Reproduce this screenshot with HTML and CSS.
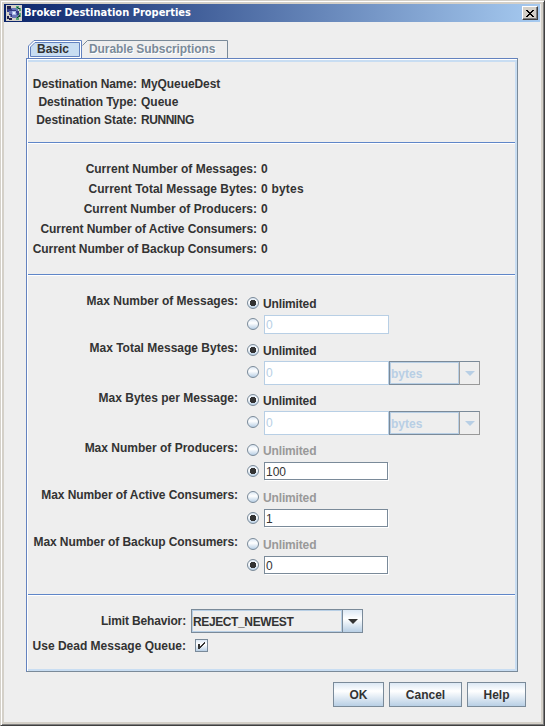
FILE: index.html
```html
<!DOCTYPE html>
<html lang="en">
<head>
<meta charset="utf-8">
<title>Broker Destination Properties</title>
<link rel="stylesheet" href="styles.css">
</head>
<body>
<div class="window">
  <header class="titlebar">
    <svg class="app-icon" viewBox="0 0 16 16" width="16" height="16" shape-rendering="crispEdges">
      <rect width="16" height="16" fill="#d4d0c8"/>
      <path d="M1 1h4v2h4v1H4v3H2V4H1zM1 11h2v2h3v2H3v-1H1z" fill="#20204c"/>
      <path d="M10 1h3v2h2v3h-2V4h-3zM12 8h3v4h-2v3h-3v-3h2z" fill="#58a878"/>
      <path d="M11 2h1v1h2v1h-2zM13 10h1v2h-2v1h-1v-2h2z" fill="#173f38"/>
      <path d="M5 3h5v1h2v2h1v4h-1v2h-2v1H6v-1H4v-2H3V5h2z" fill="#6874b8"/>
      <path d="M1 4h5v1h4v1H3v1H1zM3 9h3v3H5v-2H3zM10 6h3v4h-2V8h-1z" fill="#343c84"/>
      <path d="M6 6h4v4H6z" fill="#a8b8e8"/><path d="M7 7h2v2H7z" fill="#e8f0ff"/>
    </svg>
    <h1 class="title">Broker Destination Properties</h1>
    <button class="close" aria-label="Close">
      <svg viewBox="0 0 8 7" width="8" height="7" shape-rendering="crispEdges"><path d="M0 0h2v1h1v1h2V1h1V0h2v1H7v1H6v1H5v1h1v1h1v1h1v1H6V6H5V5H3v1H2v1H0V6h1V5h1V4h1V3H2V2H1V1H0z" fill="#000"/></svg>
    </button>
  </header>
  <nav class="tabs">
    <div class="tab active"><svg class="tab-shape" width="54" height="18" viewBox="0 0 54 18"><path d="M.5 18V6L6 .5h47.500V18" fill="#fff" stroke="#6382bf"/><path d="M2.500 16.500V7L7 2.500h44.500V16.500z" fill="#c8ddf2" stroke="#6382bf"/></svg><span>Basic</span></div>
    <div class="tab disabled"><svg class="tab-shape" width="146" height="18" viewBox="0 0 146 18"><path d="M.5 5.500L5.500.5H145.500V18" fill="none" stroke="#7a8a99"/></svg><span>Durable Subscriptions</span></div>
  </nav>
  <main class="panel">
    <section class="info dest">
      <label>Destination Name:</label><span class="snug">MyQueueDest</span>
      <label>Destination Type:</label><span>Queue</span>
      <label>Destination State:</label><span class="caps">RUNNING</span>
    </section>
    <section class="info current">
      <label>Current Number of Messages:</label><span>0</span>
      <label>Current Total Message Bytes:</label><span class="bytes">0 bytes</span>
      <label>Current Number of Producers:</label><span>0</span>
      <label class="snug">Current Number of Active Consumers:</label><span>0</span>
      <label class="snug">Current Number of Backup Consumers:</label><span>0</span>
    </section>
    <section class="limits">
      <div class="group"><label>Max Number of Messages:</label><div class="choices"><div class="line"><i class="radio on"></i><b>Unlimited</b></div><div class="line entry"><i class="radio"></i><span class="field off">0</span></div></div></div>
      <div class="group tall"><label>Max Total Message Bytes:</label><div class="choices"><div class="line"><i class="radio on"></i><b>Unlimited</b></div><div class="line entry"><i class="radio"></i><span class="field off">0</span><span class="combo off"><span class="combo-text">bytes</span><span class="arrow"><i></i></span></span></div></div></div>
      <div class="group tall"><label>Max Bytes per Message:</label><div class="choices"><div class="line"><i class="radio on"></i><b>Unlimited</b></div><div class="line entry"><i class="radio"></i><span class="field off">0</span><span class="combo off"><span class="combo-text">bytes</span><span class="arrow"><i></i></span></span></div></div></div>
      <div class="group"><label>Max Number of Producers:</label><div class="choices"><div class="line"><i class="radio"></i><b class="dim">Unlimited</b></div><div class="line entry"><i class="radio on"></i><span class="field">100</span></div></div></div>
      <div class="group"><label class="snug">Max Number of Active Consumers:</label><div class="choices"><div class="line"><i class="radio"></i><b class="dim">Unlimited</b></div><div class="line entry"><i class="radio on"></i><span class="field">1</span></div></div></div>
      <div class="group"><label class="snug">Max Number of Backup Consumers:</label><div class="choices"><div class="line"><i class="radio"></i><b class="dim">Unlimited</b></div><div class="line entry"><i class="radio on"></i><span class="field">0</span></div></div></div>
    </section>
    <section class="behavior">
      <label class="limit-label">Limit Behavior:</label><span class="combo"><span class="combo-text">REJECT_NEWEST</span><span class="arrow"><i></i></span></span>
      <label>Use Dead Message Queue:</label><span class="check"><svg width="13" height="13" viewBox="0 0 13 13" shape-rendering="crispEdges"><path d="M3 5h2v2h1V6h1V5h1V4h1V3h1v2H9v1H8v1H7v1H6v1H5v1H3z" fill="#333"/></svg></span>
    </section>
  </main>
  <footer class="actions"><button>OK</button><button>Cancel</button><button>Help</button></footer>
</div>
</body>
</html>
```
FILE: styles.css
```css
* { box-sizing: border-box; }
body { margin: 0; font: bold 12px/18px "Liberation Sans", Arial, sans-serif; color: #333; background: #eee; }
h1, button { margin: 0; font: inherit; color: inherit; }
.window { width: 545px; height: 726px; padding: 2px 2px 1px 2px; border: 1px solid #d4d0c8; border-right-color: #404040; border-bottom-color: #404040; box-shadow: inset 1px 1px #fff, inset -1px -1px #808080, inset -3px -3px #d4d0c8, inset 3px 3px #d4d0c8; }
.titlebar { display: flex; align-items: center; height: 18px; margin: 1px 2px 0 1px; padding: 0 2px; background: linear-gradient(90deg, #0a246a, #a6caf0); }
.title { flex: 1; margin-left: 2px; color: #fff; font: bold 11px/18px "DejaVu Sans Condensed", "DejaVu Sans", sans-serif; white-space: nowrap; }
.close { display: flex; align-items: center; justify-content: center; width: 16px; height: 14px; padding: 0; border: 1px solid; border-color: #fff #404040 #404040 #fff; background: #d4d0c8; box-shadow: inset -1px -1px #808080; }
.tabs { display: flex; height: 18px; margin: 18px 0 0 25px; }
.tab { position: relative; width: 54px; height: 18px; white-space: nowrap; }
.tab-shape { position: absolute; left: 0; top: 0; }
.tab span { position: relative; display: block; padding-left: 9px; line-height: 19px; }
.tab.disabled { width: 146px; color: #7a8a99; }
.tab.disabled span { padding-left: 7px; line-height: 18px; letter-spacing: -.08px; text-shadow: 1px 1px #fff; }
.panel { width: 492px; height: 614px; margin-left: 23px; border: 1px solid #6382bf; border-right-color: #7a8a99; border-bottom-color: #7a8a99; box-shadow: inset 1px 1px #fff, inset -2px -2px #c8ddf2, inset 0 3px #c8ddf2; padding-left: 1px; padding-right: 2px; }
.panel > section { border-bottom: 1px solid #5f86c8; box-shadow: 0 1px #fff; }
.panel label { text-align: right; white-space: nowrap; }
.info { display: grid; align-content: start; white-space: nowrap; }
.dest { grid-template-columns: 109px auto; grid-auto-rows: 18px; column-gap: 4px; height: 84px; padding-top: 16px; }
.dest label, .snug { letter-spacing: -.07px; }
.caps { letter-spacing: -.45px; }
.current { grid-template-columns: 229px auto; grid-auto-rows: 20px; column-gap: 4px; height: 132px; padding-top: 17px; }
.bytes { letter-spacing: .2px; }
.limits { height: 320px; padding-top: 18px; }
.group { display: flex; height: 47px; }
.group label { width: 210px; height: 18px; margin-top: -1px; }
.choices { margin-left: 9px; }
.line { display: flex; align-items: center; height: 20px; margin-bottom: 2px; }
.line b { margin-left: 4px; line-height: 20px; padding-top: 1px; letter-spacing: -.15px; }
.line.entry { height: 19px; align-items: flex-start; margin: 0; }
.tall { height: 50px; }
.tall .line:first-child { margin-bottom: 1px; }
.tall .line.entry { height: 24px; }
.radio { flex: none; width: 12px; height: 12px; border: 1px solid #7a8a99; border-radius: 50%; background: linear-gradient(#dce8f4, #fff 40%, #b8cfe5); }
.radio.on { background: radial-gradient(circle, #333 0 3px, transparent 3.500px), linear-gradient(#dce8f4, #fff 40%, #b8cfe5); }
.entry .radio { margin: 3px 5px 0 0; }
.tall .entry .radio { margin-top: 5px; }
.dim { color: #999; }
.field { width: 124px; height: 18px; padding-left: 1px; border: 1px solid #7a8a99; background: #fff; font-weight: normal; line-height: 18px; box-shadow: 1px 1px #fff; }
.field.off { width: 125px; height: 100%; border-color: #b8cfe5; color: #b8cfe5; box-shadow: none; }
.tall .field { line-height: 23px; }
.combo { display: flex; width: 91px; height: 24px; border: 1px solid #7a8a99; }
.combo-text { flex: 1; border: 1px solid #b8cfe5; line-height: 23px; }
.arrow { display: flex; width: 20px; align-items: center; justify-content: center; border-left: 1px solid #7a8a99; background: linear-gradient(#dce8f4, #fff 40%, #b8cfe5); }
.arrow i { border: 5px solid transparent; border-top-color: #333; border-bottom: 0; }
.combo.off { border-color: #7a8a99 #999 #999 #7a8a99; color: #b8cfe5; }
.off .combo-text { margin: -1px 0 -1px -1px; border: 1px solid #7a8a99; border-right: 0; box-shadow: inset 0 0 0 1px #b8cfe5; line-height: 24px; padding-left: 1px; }
.off .arrow { background: #eee; border-color: #999; }
.off .arrow i { border-top-color: #b8cfe5; }
.panel > .behavior { display: grid; grid-template-columns: 158px auto; grid-template-rows: 24px 13px; gap: 6px 5px; align-items: center; padding-top: 14px; border: 0; box-shadow: none; }
.limit-label { letter-spacing: -.15px; }
.behavior .combo { width: 172px; }
.behavior .combo-text { letter-spacing: -.38px; }
.check { width: 13px; height: 13px; margin-left: 4px; border: 1px solid #7a8a99; background: linear-gradient(#dce8f4, #fff 40%, #b8cfe5); }
.check svg { display: block; margin: -1px; }
.actions { display: flex; gap: 5px; justify-content: flex-end; padding: 10px 16px 0 0; }
.actions button { width: 51px; height: 25px; padding: 0; border: 1px solid #7a8a99; background: linear-gradient(#dce8f4, #fff 35%, #b8cfe5); }
.actions button:nth-child(2) { width: 73px; }
.actions button:nth-child(3) { width: 59px; }
```
